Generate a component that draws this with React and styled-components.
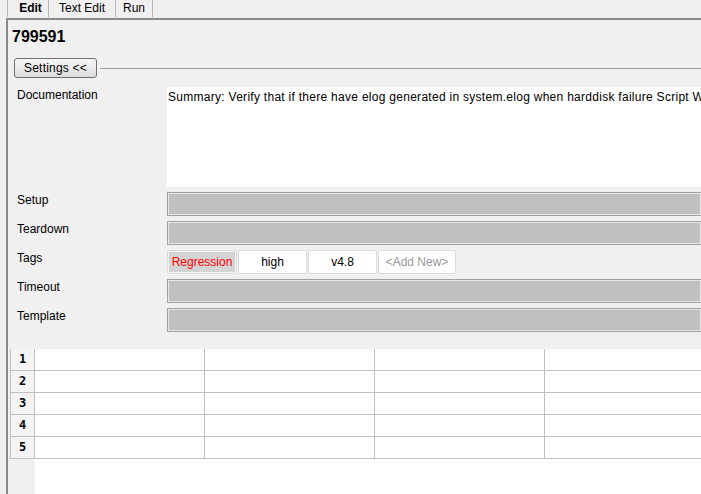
import React from "react";
import styled, { createGlobalStyle } from "styled-components";

const GlobalStyle = createGlobalStyle`
  html, body {
    margin: 0;
    padding: 0;
    height: 100%;
    overflow: hidden;
  }
  body {
    background: #f0f0f0;
    font-family: "Liberation Sans", Arial, sans-serif;
    font-size: 12px;
    color: #000;
  }
  #root {
    height: 100%;
  }
`;

const Window = styled.div`
  height: 100%;
  display: flex;
  flex-direction: column;
`;

const TabBar = styled.div`
  display: flex;
  height: 18px;
  padding-left: 7px;
`;

const Tab = styled.div`
  box-sizing: border-box;
  width: ${p => p.$w}px;
  height: 17px;
  padding-left: ${p => p.$pl || 0}px;
  line-height: 17px;
  text-align: center;
  border-right: 1px solid #b4b4b4;
  border-left: ${p => (p.$first ? "1px solid #b4b4b4" : "none")};
  font-weight: ${p => (p.$active ? "bold" : "normal")};
`;

const Panel = styled.div`
  flex: 1;
  display: flex;
  flex-direction: column;
  margin-left: 6px;
  border-left: 2px solid #8a8a8a;
  border-top: 2px solid #8a8a8a;
  overflow: hidden;
`;

const Title = styled.div`
  margin: 7px 0 0 4px;
  font-size: 16px;
  line-height: 20px;
  font-weight: bold;
`;

const SettingsRow = styled.div`
  display: flex;
  align-items: center;
  margin: 11px 0 0 6px;
`;

const Button = styled.button`
  box-sizing: border-box;
  width: 83px;
  height: 20px;
  padding: 0;
  border: 1px solid #707070;
  border-radius: 3px;
  background: linear-gradient(#f6f6f6, #dddddd);
  font-family: inherit;
  font-size: 12px;
  letter-spacing: 0.2px;
  color: #000;
`;

const Rule = styled.div`
  flex: 1;
  height: 1px;
  margin-left: 3px;
  background: #a0a0a0;
`;

const Form = styled.div`
  display: grid;
  grid-template-columns: 150px 1fr;
  row-gap: 5px;
  margin: 9px 0 0 9px;
`;

const Label = styled.div`
  padding-top: 1px;
  line-height: 14px;
`;

const TextArea = styled.div`
  height: 100px;
  padding: 3px 1px;
  box-sizing: border-box;
  background: #fff;
  white-space: nowrap;
  overflow: hidden;
  line-height: 14px;
  letter-spacing: 0.28px;
`;

const Field = styled.div`
  box-sizing: border-box;
  height: 24px;
  border: 1px solid #a0a0a0;
  border-right: none;
  background: #c0c0c0;
  box-shadow: inset 0 0 0 1px #e8e8e8;
`;

const TagList = styled.div`
  display: flex;
  gap: 1px;
  height: 24px;
`;

const Chip = styled.div`
  box-sizing: border-box;
  width: ${p => p.$w}px;
  height: 24px;
  border: 1px solid #dcdcdc;
  border-radius: 2px;
  background: ${p => (p.$selected ? "#d4d4d4" : "#fff")};
  box-shadow: ${p => (p.$selected ? "inset 0 0 0 1px #f4f4f4" : "none")};
  color: ${p => p.$color || "#000"};
  line-height: 22px;
  text-align: center;
`;

const GridArea = styled.div`
  flex: 1;
  display: flex;
  margin: 17px 0 0 2px;
`;

const RowHeaders = styled.div`
  flex: none;
  display: flex;
  flex-direction: column;
  width: 25px;
`;

const RowHeader = styled.div`
  box-sizing: border-box;
  height: 22px;
  border: 1px solid #c0c0c0;
  border-top: none;
  background: #f4f4f4;
  font-family: "DejaVu Sans Mono", "Liberation Mono", monospace;
  font-weight: bold;
  font-size: 12px;
  line-height: 21px;
  text-align: center;
`;

const Body = styled.div`
  flex: 1;
  background: #fff;
`;

const Row = styled.div`
  display: flex;
  height: 22px;
`;

const Cell = styled.div`
  box-sizing: border-box;
  height: 22px;
  width: 170px;
  flex: ${p => (p.$last ? "1" : "none")};
  border-bottom: 1px solid #c0c0c0;
  border-right: ${p => (p.$last ? "none" : "1px solid #c0c0c0")};
`;

const rows = [1, 2, 3, 4, 5];

export default function App() {
  return (
    <Window>
      <GlobalStyle />
      <TabBar>
        <Tab $w={42} $pl={5} $first $active>Edit</Tab>
        <Tab $w={67}>Text Edit</Tab>
        <Tab $w={37}>Run</Tab>
      </TabBar>
      <Panel>
        <Title>799591</Title>
        <SettingsRow>
          <Button>Settings &lt;&lt;</Button>
          <Rule />
        </SettingsRow>
        <Form>
          <Label>Documentation</Label>
          <TextArea>
            Summary: Verify that if there have elog generated in system.elog when harddisk failure Script Written by tester
          </TextArea>
          <Label>Setup</Label>
          <Field />
          <Label>Teardown</Label>
          <Field />
          <Label>Tags</Label>
          <TagList>
            <Chip $w={70} $selected $color="#ff0000">Regression</Chip>
            <Chip $w={69}>high</Chip>
            <Chip $w={69}>v4.8</Chip>
            <Chip $w={78} $color="#999">&lt;Add New&gt;</Chip>
          </TagList>
          <Label>Timeout</Label>
          <Field />
          <Label>Template</Label>
          <Field />
        </Form>
        <GridArea>
          <RowHeaders>
            {rows.map(n => (
              <RowHeader key={n}>{n}</RowHeader>
            ))}
          </RowHeaders>
          <Body>
            {rows.map(n => (
              <Row key={n}>
                <Cell />
                <Cell />
                <Cell />
                <Cell $last />
              </Row>
            ))}
          </Body>
        </GridArea>
      </Panel>
    </Window>
  );
}
